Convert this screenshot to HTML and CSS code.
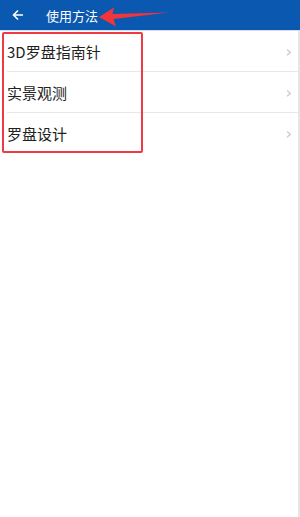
FILE: index.html
```html
<!doctype html>
<html lang="zh">
<head>
    <meta charset="UTF-8">
    <meta name="viewport" content="width=device-width, initial-scale=1.0">
    <title>使用方法</title>
    <link rel="stylesheet" href="styles.css">
</head>
<body>
<div class="topBar">
    <svg class="back" width="12" height="12" viewBox="0 0 12 12">
        <path d="M11 6H1.5M6 1.5L1.5 6 6 10.5" stroke="#fff" stroke-width="1.6" fill="none"/>
    </svg>
    <span class="title">使用方法</span>
    <svg class="mark" width="72" height="22" viewBox="0 0 72 22">
        <path d="M1 11L16 1.5 14.5 8 71 6.5 15.5 13 18 20.5Z" fill="#f0353b"/>
    </svg>
</div>
<div class="content">
    <ul class="menu">
        <li>3D罗盘指南针<span class="arrow">›</span></li>
        <li>实景观测<span class="arrow">›</span></li>
        <li>罗盘设计<span class="arrow">›</span></li>
    </ul>
    <div class="box"></div>
</div>
</body>
</html>
```

FILE: styles.css
```css
* {
    padding: 0;
    margin: 0;
    list-style: none;
}

body {
    width: 300px;
    height: 517px;
    background-color: #fff;
    font-family: "Noto Sans CJK SC", "Noto Sans", sans-serif;
    overflow: hidden;
}

.topBar {
    position: relative;
    display: flex;
    align-items: center;
    height: 30px;
    background-color: #0b58b0;
    border-bottom: 1px solid #d6dde6;
}

.topBar .back {
    margin-left: 12px;
}

.topBar .title {
    margin-left: 22px;
    color: #fff;
    font-size: 13px;
}

.topBar .mark {
    position: absolute;
    left: 98px;
    top: 6px;
}

.content {
    position: relative;
    height: 486px;
    border-right: 2px solid #e6e6e6;
}

.menu {
    padding-left: 7px;
}

.menu li {
    display: flex;
    align-items: center;
    justify-content: space-between;
    height: 40px;
    border-bottom: 1px solid #e8e8e8;
    font-size: 15px;
    color: #222;
}

.menu li:last-child {
    border-bottom: none;
}

.menu li .arrow {
    margin-right: 6px;
    color: #c8c8c8;
    font-size: 16px;
    font-family: "DejaVu Sans", sans-serif;
}

.box {
    position: absolute;
    left: 2px;
    top: 1px;
    width: 137px;
    height: 117px;
    border: 2px solid #ee3b43;
    border-radius: 2px;
}
```
